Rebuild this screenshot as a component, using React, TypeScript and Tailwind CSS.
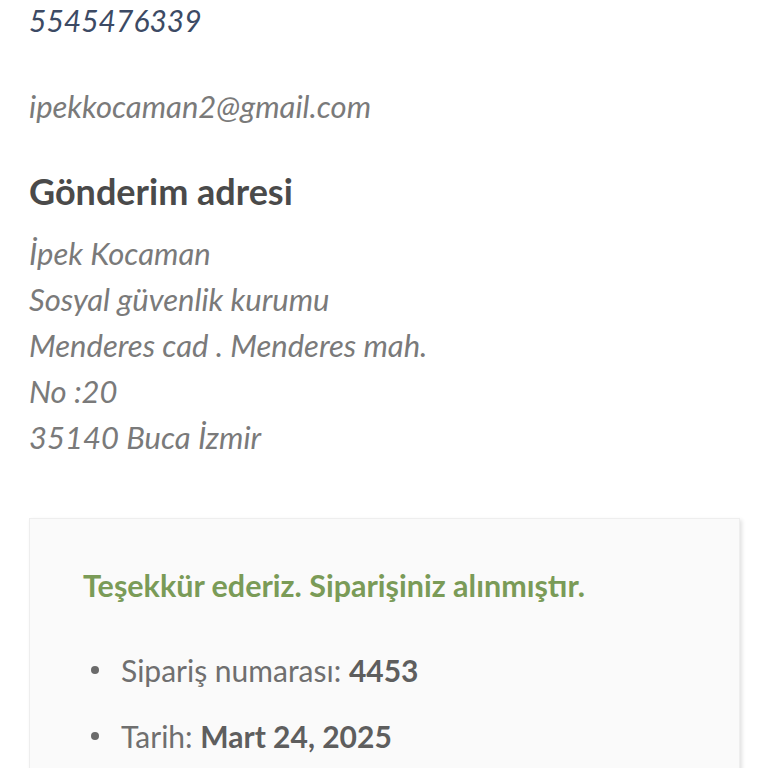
import React from 'react';

const address = [
  'İpek Kocaman',
  'Sosyal güvenlik kurumu',
  'Menderes cad . Menderes mah.',
  'No :20',
  '35140 Buca İzmir',
];

export default function App() {
  return (
    <div className="min-h-screen bg-white font-['Lato','Liberation_Sans',sans-serif] overflow-hidden">
      <div className="px-[29px]">
        <p className="italic text-[30px] leading-[40px] text-[#3c4a64]">5545476339</p>
        <p className="italic text-[31px] leading-[40px] text-[#7a7a7a] mt-[46px]">ipekkocaman2@gmail.com</p>
        <h2 className="font-bold text-[36px] leading-[40px] text-[#4a4a4a] mt-[45px]">Gönderim adresi</h2>
        <address className="italic text-[31px] leading-[46px] text-[#7a7a7a] mt-[19px]">
          {address.map((line) => (
            <div key={line}>{line}</div>
          ))}
        </address>

        <div className="mt-[58px] w-[711px] bg-[#fafafa] border border-[#eeeeee] shadow-[2px_2px_4px_rgba(0,0,0,0.12)] pl-[53px] pt-[48px] pb-10">
          <p className="font-bold text-[30.5px] leading-[36px] text-[#7a9b57]">Teşekkür ederiz. Siparişiniz alınmıştır.</p>
          <ul className="mt-[47px] text-[30px] leading-[40px] text-[#6f6f6f]">
            <li className="flex items-center">
              <span className="w-[8px] h-[8px] rounded-full bg-[#6a6a6a] ml-[8px] mr-[22px]" />
              <span>
                Sipariş numarası: <strong className="font-bold text-[#5e5e5e]">4453</strong>
              </span>
            </li>
            <li className="flex items-center mt-[26px]">
              <span className="w-[8px] h-[8px] rounded-full bg-[#6a6a6a] ml-[8px] mr-[22px]" />
              <span>
                Tarih: <strong className="font-bold text-[#5e5e5e]">Mart 24, 2025</strong>
              </span>
            </li>
          </ul>
        </div>
      </div>
    </div>
  );
}
